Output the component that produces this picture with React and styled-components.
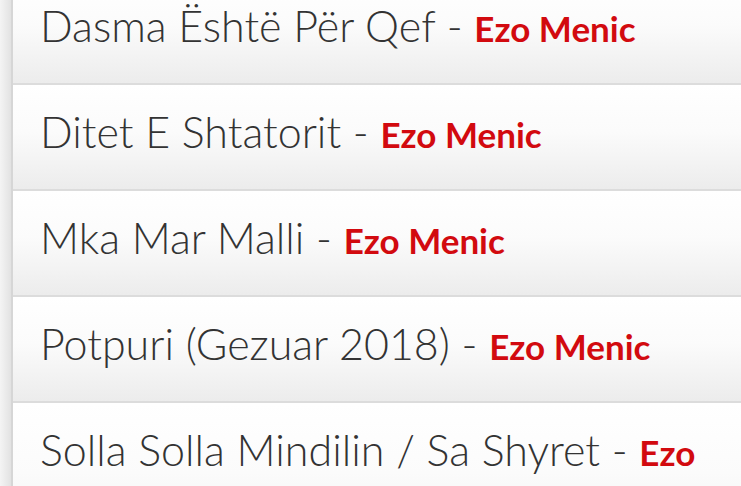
import React from "react";
import styled, { createGlobalStyle } from "styled-components";

const Global = createGlobalStyle`
  html, body { margin: 0; padding: 0; background: #fff; }
  body { width: 741px; height: 486px; overflow: hidden; }
`;

const Page = styled.div`
  display: flex;
  align-items: flex-start;
  width: 741px;
  height: 486px;
  overflow: hidden;
  background: #fff;
`;

const Rail = styled.div`
  flex: 0 0 11px;
  align-self: stretch;
  background: linear-gradient(to right, #f4f4f4, #e2e2e2);
  border-right: 2px solid #d6d6d6;
`;

const List = styled.ul`
  flex: 1;
  list-style: none;
  margin: -21px 0 0 0;
  padding: 0;
  min-width: 0;
`;

const Row = styled.li`
  box-sizing: border-box;
  min-height: 106px;
  padding: 21px 0 31px 27px;
  line-height: 52px;
  background: linear-gradient(to bottom, #ffffff 0%, #fbfbfb 45%, #ececec 100%);
  border-bottom: 2px solid #dcdcdc;
  font-family: "Lato", "Open Sans", sans-serif;
  font-weight: 300;
  font-size: 43px;
  color: #333;
`;

const Artist = styled.span`
  color: #d20a0f;
  font-weight: 700;
  font-size: 35px;
  line-height: 1;
`;

const songs = [
  "Dasma Është Për Qef",
  "Ditet E Shtatorit",
  "Mka Mar Malli",
  "Potpuri (Gezuar 2018)",
  "Solla Solla Mindilin / Sa Shyret",
];

export default function App() {
  return (
    <>
      <Global />
      <Page>
        <Rail />
        <List>
          {songs.map((s) => (
            <Row key={s}>
              {s}&nbsp;-&nbsp;<Artist>Ezo Menic</Artist>
            </Row>
          ))}
        </List>
      </Page>
    </>
  );
}
